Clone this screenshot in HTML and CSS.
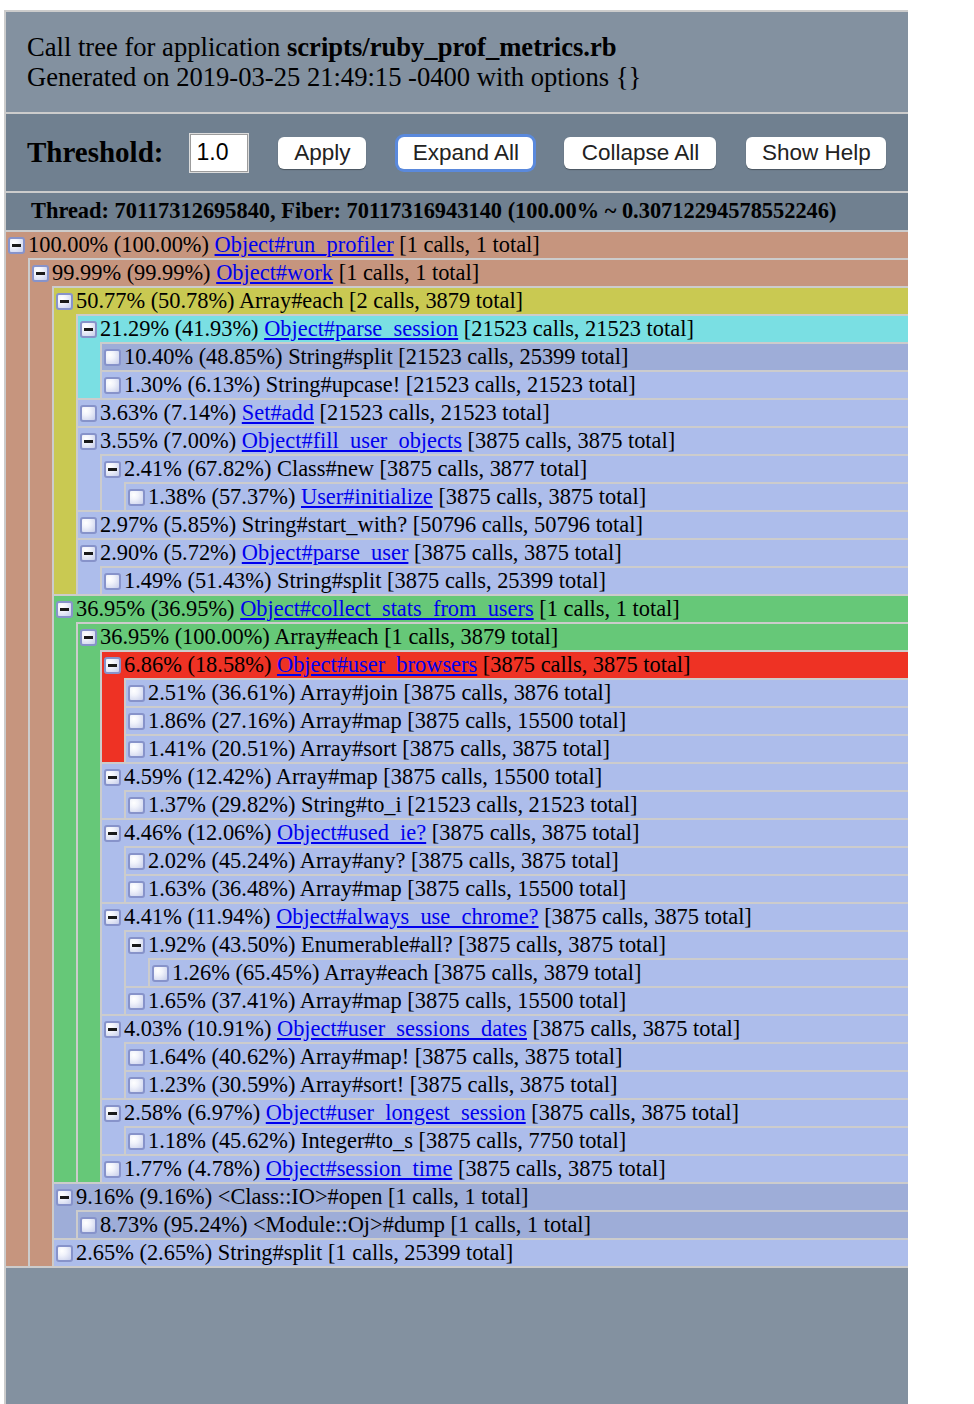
FILE: index.html
```html
<!DOCTYPE html>
<html>
<head>
<meta charset="utf-8">
<title>ruby-prof call tree</title>
<link rel="stylesheet" href="styles.css">
</head>
<body>
<div class="page">
  <div class="titlebar">
    Call tree for application <b>scripts/ruby_prof_metrics.rb</b><br>
    Generated on 2019-03-25 21:49:15 -0400 with options {}
  </div>
  <div class="commands">
    <span class="threshold-label">Threshold:</span>
    <input class="threshold" type="text" value="1.0">
    <button class="btn btn-apply">Apply</button>
    <button class="btn btn-expand">Expand All</button>
    <button class="btn btn-collapse">Collapse All</button>
    <button class="btn btn-help">Show Help</button>
  </div>
  <div class="thread">Thread: 70117312695840, Fiber: 70117316943140 (100.00% ~ 0.30712294578552246)</div>
  <ul class="tree">
    <li class="salmon"><div class="node"><span class="toggle minus"></span><span class="label">100.00% (100.00%) <a href="#">Object#run_profiler</a> [1 calls, 1 total]</span></div>
      <ul>
        <li class="salmon"><div class="node"><span class="toggle minus"></span><span class="label">99.99% (99.99%) <a href="#">Object#work</a> [1 calls, 1 total]</span></div>
          <ul>
            <li class="yellow"><div class="node"><span class="toggle minus"></span><span class="label">50.77% (50.78%) Array#each [2 calls, 3879 total]</span></div>
              <ul>
                <li class="cyan"><div class="node"><span class="toggle minus"></span><span class="label">21.29% (41.93%) <a href="#">Object#parse_session</a> [21523 calls, 21523 total]</span></div>
                  <ul>
                    <li class="dark"><div class="node"><span class="toggle"></span><span class="label">10.40% (48.85%) String#split [21523 calls, 25399 total]</span></div></li>
                    <li class="light"><div class="node"><span class="toggle"></span><span class="label">1.30% (6.13%) String#upcase! [21523 calls, 21523 total]</span></div></li>
                  </ul>
                </li>
                <li class="light"><div class="node"><span class="toggle"></span><span class="label">3.63% (7.14%) <a href="#">Set#add</a> [21523 calls, 21523 total]</span></div></li>
                <li class="light"><div class="node"><span class="toggle minus"></span><span class="label">3.55% (7.00%) <a href="#">Object#fill_user_objects</a> [3875 calls, 3875 total]</span></div>
                  <ul>
                    <li class="light"><div class="node"><span class="toggle minus"></span><span class="label">2.41% (67.82%) Class#new [3875 calls, 3877 total]</span></div>
                      <ul>
                        <li class="light"><div class="node"><span class="toggle"></span><span class="label">1.38% (57.37%) <a href="#">User#initialize</a> [3875 calls, 3875 total]</span></div></li>
                      </ul>
                    </li>
                  </ul>
                </li>
                <li class="light"><div class="node"><span class="toggle"></span><span class="label">2.97% (5.85%) String#start_with? [50796 calls, 50796 total]</span></div></li>
                <li class="light"><div class="node"><span class="toggle minus"></span><span class="label">2.90% (5.72%) <a href="#">Object#parse_user</a> [3875 calls, 3875 total]</span></div>
                  <ul>
                    <li class="light"><div class="node"><span class="toggle"></span><span class="label">1.49% (51.43%) String#split [3875 calls, 25399 total]</span></div></li>
                  </ul>
                </li>
              </ul>
            </li>
            <li class="green"><div class="node"><span class="toggle minus"></span><span class="label">36.95% (36.95%) <a href="#">Object#collect_stats_from_users</a> [1 calls, 1 total]</span></div>
              <ul>
                <li class="green"><div class="node"><span class="toggle minus"></span><span class="label">36.95% (100.00%) Array#each [1 calls, 3879 total]</span></div>
                  <ul>
                    <li class="red"><div class="node"><span class="toggle minus"></span><span class="label">6.86% (18.58%) <a href="#">Object#user_browsers</a> [3875 calls, 3875 total]</span></div>
                      <ul>
                        <li class="light"><div class="node"><span class="toggle"></span><span class="label">2.51% (36.61%) Array#join [3875 calls, 3876 total]</span></div></li>
                        <li class="light"><div class="node"><span class="toggle"></span><span class="label">1.86% (27.16%) Array#map [3875 calls, 15500 total]</span></div></li>
                        <li class="light"><div class="node"><span class="toggle"></span><span class="label">1.41% (20.51%) Array#sort [3875 calls, 3875 total]</span></div></li>
                      </ul>
                    </li>
                    <li class="light"><div class="node"><span class="toggle minus"></span><span class="label">4.59% (12.42%) Array#map [3875 calls, 15500 total]</span></div>
                      <ul>
                        <li class="light"><div class="node"><span class="toggle"></span><span class="label">1.37% (29.82%) String#to_i [21523 calls, 21523 total]</span></div></li>
                      </ul>
                    </li>
                    <li class="light"><div class="node"><span class="toggle minus"></span><span class="label">4.46% (12.06%) <a href="#">Object#used_ie?</a> [3875 calls, 3875 total]</span></div>
                      <ul>
                        <li class="light"><div class="node"><span class="toggle"></span><span class="label">2.02% (45.24%) Array#any? [3875 calls, 3875 total]</span></div></li>
                        <li class="light"><div class="node"><span class="toggle"></span><span class="label">1.63% (36.48%) Array#map [3875 calls, 15500 total]</span></div></li>
                      </ul>
                    </li>
                    <li class="light"><div class="node"><span class="toggle minus"></span><span class="label">4.41% (11.94%) <a href="#">Object#always_use_chrome?</a> [3875 calls, 3875 total]</span></div>
                      <ul>
                        <li class="light"><div class="node"><span class="toggle minus"></span><span class="label">1.92% (43.50%) Enumerable#all? [3875 calls, 3875 total]</span></div>
                          <ul>
                            <li class="light"><div class="node"><span class="toggle"></span><span class="label">1.26% (65.45%) Array#each [3875 calls, 3879 total]</span></div></li>
                          </ul>
                        </li>
                        <li class="light"><div class="node"><span class="toggle"></span><span class="label">1.65% (37.41%) Array#map [3875 calls, 15500 total]</span></div></li>
                      </ul>
                    </li>
                    <li class="light"><div class="node"><span class="toggle minus"></span><span class="label">4.03% (10.91%) <a href="#">Object#user_sessions_dates</a> [3875 calls, 3875 total]</span></div>
                      <ul>
                        <li class="light"><div class="node"><span class="toggle"></span><span class="label">1.64% (40.62%) Array#map! [3875 calls, 3875 total]</span></div></li>
                        <li class="light"><div class="node"><span class="toggle"></span><span class="label">1.23% (30.59%) Array#sort! [3875 calls, 3875 total]</span></div></li>
                      </ul>
                    </li>
                    <li class="light"><div class="node"><span class="toggle minus"></span><span class="label">2.58% (6.97%) <a href="#">Object#user_longest_session</a> [3875 calls, 3875 total]</span></div>
                      <ul>
                        <li class="light"><div class="node"><span class="toggle"></span><span class="label">1.18% (45.62%) Integer#to_s [3875 calls, 7750 total]</span></div></li>
                      </ul>
                    </li>
                    <li class="light"><div class="node"><span class="toggle"></span><span class="label">1.77% (4.78%) <a href="#">Object#session_time</a> [3875 calls, 3875 total]</span></div></li>
                  </ul>
                </li>
              </ul>
            </li>
            <li class="dark"><div class="node"><span class="toggle minus"></span><span class="label">9.16% (9.16%) &lt;Class::IO&gt;#open [1 calls, 1 total]</span></div>
              <ul>
                <li class="dark"><div class="node"><span class="toggle"></span><span class="label">8.73% (95.24%) &lt;Module::Oj&gt;#dump [1 calls, 1 total]</span></div></li>
              </ul>
            </li>
            <li class="light"><div class="node"><span class="toggle"></span><span class="label">2.65% (2.65%) String#split [1 calls, 25399 total]</span></div></li>
          </ul>
        </li>
      </ul>
    </li>
  </ul>
  <div class="sentinel"></div>
</div>
</body>
</html>
```

FILE: styles.css
```css
html, body {
  margin: 0;
  padding: 0;
  background: #ffffff;
}

body {
  font-family: "Liberation Serif", "Times New Roman", serif;
  color: #000;
}

.page {
  margin: 10px 0 0 4px;
  width: 904px;
}

.titlebar,
.commands,
.thread,
.sentinel,
.tree li {
  border-top: 2px solid #cccccc;
  border-left: 2px solid #cccccc;
}

.titlebar {
  background: #8391a0;
  font-size: 26.6px;
  line-height: 30px;
  padding: 20px 21px;
  height: 60px;
  white-space: nowrap;
}

.commands {
  background: #708090;
  height: 77px;
  display: flex;
  align-items: center;
  padding-left: 21px;
}

.threshold-label {
  font-weight: bold;
  font-size: 29px;
  margin-right: 27px;
}

.threshold {
  width: 58px;
  height: 38px;
  box-sizing: border-box;
  border: 1px solid #9c9c9c;
  outline: 1px solid #dcdcdc;
  background: #fff;
  font-family: "Liberation Sans", Arial, sans-serif;
  font-size: 23px;
  padding: 0 0 0 5px;
  margin: 0 30px 0 0;
  color: #000;
}

.btn {
  font-family: "Liberation Sans", Arial, sans-serif;
  font-size: 22.5px;
  color: #222;
  background: #ffffff;
  border: none;
  border-radius: 6px;
  height: 32px;
  padding: 0;
  margin: 0;
  text-align: center;
  box-shadow: 0 1px 1px rgba(0, 0, 0, 0.35);
  flex: none;
}

.btn-apply { width: 88px; }

.btn-expand {
  width: 135px;
  margin-left: 32px;
  box-shadow: 0 0 0 3px #5a89dc;
}

.btn-collapse {
  width: 152px;
  margin-left: 31px;
}

.btn-help {
  width: 140px;
  margin-left: 30px;
}

.thread {
  background: #708090;
  font-weight: bold;
  font-size: 22.4px;
  line-height: 26px;
  padding: 5px 0 6px 25px;
  white-space: nowrap;
}

.tree,
.tree ul {
  list-style: none;
  margin: 0;
  padding: 0;
}

.tree li {
  white-space: nowrap;
  font-size: 22.4px;
}

.tree ul li {
  margin-left: 22px;
}

.node {
  display: flex;
  align-items: center;
  height: 26px;
  padding-left: 2px;
}

.label {
  line-height: 26px;
}

.label a {
  color: #0000ee;
  text-decoration: underline;
}

.toggle {
  position: relative;
  flex: none;
  width: 17px;
  height: 17px;
  box-sizing: border-box;
  border: 2px solid #8793ca;
  border-radius: 3px;
  background: radial-gradient(circle at 30% 30%, #ffffff 0%, #f1f3fb 35%, #c6cdea 100%);
  margin-right: 3px;
}

.toggle.minus::after {
  content: "";
  position: absolute;
  left: 2px;
  top: 5px;
  width: 9px;
  height: 3px;
  background: #1a1a1a;
}

.salmon { background: #c6957e; }
.yellow { background: #c9c952; }
.cyan { background: #7adfe3; }
.green { background: #66c878; }
.red { background: #ee3224; }
.dark { background: #9eadd8; }
.light { background: #adbdeb; }

.sentinel {
  background: #8391a0;
  height: 136px;
}
```
